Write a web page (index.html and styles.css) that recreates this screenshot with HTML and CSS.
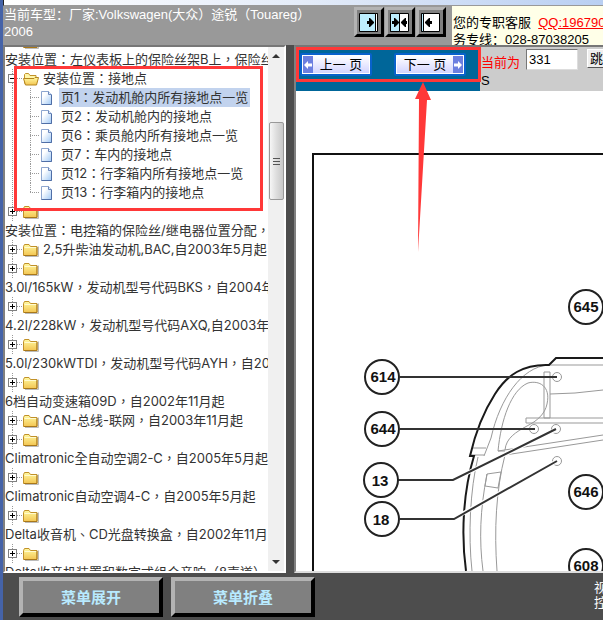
FILE: index.html
```
<!DOCTYPE html>
<html lang="zh-CN">
<head>
<meta charset="utf-8">
<meta name="viewport" content="width=device-width, initial-scale=1">
<title>当前车型</title>
<link rel="stylesheet" href="styles.css">
</head>
<body>
<svg class="defs" aria-hidden="true">
  <defs>
    <linearGradient id="gold" x1="0" y1="0" x2="0" y2="1"><stop offset="0" stop-color="#fff9a0"/><stop offset="1" stop-color="#f3c552"/></linearGradient>
    <linearGradient id="sheet" x1="0" y1="0" x2="1" y2="1"><stop offset="0.3" stop-color="#fff"/><stop offset="1" stop-color="#9fc8f5"/></linearGradient>
    <symbol id="folder" viewBox="0 0 16 16">
      <path d="M2 14.5h13.5v-10" fill="none" stroke="#bbb"/>
      <path d="M.5 4.500l1-2h4.500l1.500 2h6.500v9H.5z" fill="url(#gold)" stroke="#c19129"/>
      <path d="M1.500 5.500h12" stroke="#fffbd0"/>
      <path d="M14 5v8.500H1" fill="none" stroke="#a9781a"/>
    </symbol>
    <symbol id="folder-open" viewBox="0 0 16 16">
      <path d="M1.500 12.500v-9l1-1h3l1.500 2h6v3" fill="#fff6a8" stroke="#c19129"/>
      <path d="M.5 7.500h10.500l1-1h3.500l-2 7.500H2.500z" fill="url(#gold)" stroke="#b4851f"/>
    </symbol>
    <symbol id="page" viewBox="0 0 16 16">
      <path d="M2.500 1.500h7l3 3v10h-10z" fill="url(#sheet)" stroke="#8ea6cf"/>
      <path d="M9.500 1.500v3h3" fill="#dcebff" stroke="#6d88ba"/>
      <path d="M12.500 5v9.500H2.500" fill="none" stroke="#4f6ea6"/>
    </symbol>
  </defs>
</svg>
<div class="window">
  <div class="titlebar"></div>
  <header class="header">
    <h1 class="model">当前车型：厂家:Volkswagen(大众）途锐（Touareg） 2006</h1>
    <div class="views">
      <button class="view" aria-label="展开左栏"><svg viewBox="0 0 19 19"><path fill="#bdeeff" stroke="#000" d="M.5.5h18v18H.5z"/><path fill="#fff" stroke="#000" d="M16.500.5h2v18h-2z"/><path d="M8 8h2V5h1l4 4v1l-4 4h-1v-3H8z"/></svg></button>
      <button class="view" aria-label="平分"><svg viewBox="0 0 19 19"><path fill="#fff" stroke="#000" d="M.5.5h18v18H.5z"/><path fill="#bdeeff" stroke="#000" d="M.5.5h9v18h-9z"/><path d="M2 8h2V5h1l4 4v1l-4 4H4v-3H2zM17 8h-1V5h-1l-4 4v1l4 4h1v-3h1z"/></svg></button>
      <button class="view" aria-label="收起左栏"><svg viewBox="0 0 19 19"><path fill="#fff" stroke="#000" d="M.5.5h18v18H.5z"/><path fill="#bdeeff" stroke="#000" d="M.5.5h2v18h-2z"/><path d="M11 8H9V5H8L4 9v1l4 4h1v-3h2z"/></svg></button>
    </div>
    <p class="service">您的专职客服&nbsp; <a href="#qq">QQ:196790</a><br>务专线：028-87038205</p>
  </header>

  <main class="frames">
    <nav class="sidebar">
      <ul class="tree">
        <li class="row row--cut"><svg class="icon"><use href="#folder"/></svg></li>
        <li class="row row--text">安装位置：左仪表板上的保险丝架B上，保险丝</li>
        <li>
          <div class="row row--node"><button class="toggle toggle--open" aria-label="折叠"></button><svg class="icon"><use href="#folder-open"/></svg>安装位置：接地点</div>
          <ul class="pages">
            <li class="row row--page"><svg class="icon"><use href="#page"/></svg><a class="page page--current" href="#p1">页1：发动机舱内所有接地点一览</a></li>
            <li class="row row--page"><svg class="icon"><use href="#page"/></svg><a class="page" href="#p2">页2：发动机舱内的接地点</a></li>
            <li class="row row--page"><svg class="icon"><use href="#page"/></svg><a class="page" href="#p6">页6：乘员舱内所有接地点一览</a></li>
            <li class="row row--page"><svg class="icon"><use href="#page"/></svg><a class="page" href="#p7">页7：车内的接地点</a></li>
            <li class="row row--page"><svg class="icon"><use href="#page"/></svg><a class="page" href="#p12">页12：行李箱内所有接地点一览</a></li>
            <li class="row row--page"><svg class="icon"><use href="#page"/></svg><a class="page" href="#p13">页13：行李箱内的接地点</a></li>
          </ul>
        </li>
        <li class="row row--node"><button class="toggle" aria-label="展开"></button><svg class="icon"><use href="#folder"/></svg></li>
        <li class="row row--text">安装位置：电控箱的保险丝/继电器位置分配，</li>
        <li class="row row--node"><button class="toggle" aria-label="展开"></button><svg class="icon"><use href="#folder"/></svg>2,5升柴油发动机,BAC,自2003年5月起</li>
        <li class="row row--node"><button class="toggle" aria-label="展开"></button><svg class="icon"><use href="#folder"/></svg></li>
        <li class="row row--text">3.0l/165kW，发动机型号代码BKS，自2004年</li>
        <li class="row row--node"><button class="toggle" aria-label="展开"></button><svg class="icon"><use href="#folder"/></svg></li>
        <li class="row row--text">4.2l/228kW，发动机型号代码AXQ,自2003年</li>
        <li class="row row--node"><button class="toggle" aria-label="展开"></button><svg class="icon"><use href="#folder"/></svg></li>
        <li class="row row--text">5.0l/230kWTDI，发动机型号代码AYH，自20</li>
        <li class="row row--node"><button class="toggle" aria-label="展开"></button><svg class="icon"><use href="#folder"/></svg></li>
        <li class="row row--text">6档自动变速箱09D，自2002年11月起</li>
        <li class="row row--node"><button class="toggle" aria-label="展开"></button><svg class="icon"><use href="#folder"/></svg>CAN-总线-联网，自2003年11月起</li>
        <li class="row row--node"><button class="toggle" aria-label="展开"></button><svg class="icon"><use href="#folder"/></svg></li>
        <li class="row row--text">Climatronic全自动空调2-C，自2005年5月起</li>
        <li class="row row--node"><button class="toggle" aria-label="展开"></button><svg class="icon"><use href="#folder"/></svg></li>
        <li class="row row--text">Climatronic自动空调4-C，自2005年5月起</li>
        <li class="row row--node"><button class="toggle" aria-label="展开"></button><svg class="icon"><use href="#folder"/></svg></li>
        <li class="row row--text">Delta收音机、CD光盘转换盒，自2002年11月</li>
        <li class="row row--node"><button class="toggle" aria-label="展开"></button><svg class="icon"><use href="#folder"/></svg></li>
        <li class="row row--text">Delta收音机装置和数字式组合音响（8声道）</li>
      </ul>
      <div class="scroll">
        <svg class="scroll-arrow" viewBox="0 0 8 4"><path d="M0 4L4 0l4 4z"/></svg>
        <div class="thumb"><i></i><i></i><i></i></div>
        <svg class="scroll-arrow" viewBox="0 0 8 4"><path d="M0 0l4 4 4-4z"/></svg>
      </div>
      <div class="mark mark--tree"></div>
    </nav>

    <section class="content">
      <div class="toolbar">
        <div class="pager">
          <button class="turn"><span class="turn-arrow"><svg viewBox="0 0 8 8"><path d="M0 4l4-4v2.500h4v3H4V8z"/></svg></span><span class="turn-text">上一 页</span></button>
          <button class="turn"><span class="turn-text">下一 页</span><span class="turn-arrow"><svg viewBox="0 0 8 8"><path d="M8 4L4 0v2.500H0v3h4V8z"/></svg></span></button>
        </div>
        <form class="jump">
          <div class="jump-line"><label for="pageno">当前为</label><input id="pageno" type="text" value="331"><button class="go" type="button">跳</button></div>
          <div class="suffix">S</div>
        </form>
      </div>
      <svg class="diagram" viewBox="296 91 307 480" preserveAspectRatio="xMinYMin slice">
        <path d="M603 154H313v418" fill="none" stroke="#111" stroke-width="2"/>
        <g fill="none" stroke="#999">
          <path d="M548 365h55M548 365C522 367 500 398 491 438L484 456M498 451C501 420 511 390 528 383C539 380 551 386 547 404C545 414 537 421 527 426C516 432 506 438 505 450"/>
          <path d="M544 372h6v46h-6zM550 394l25-1 28-3"/>
          <path d="M603 418h-77v5h77M498 451l105-16M505 455l98-15M498 451h7"/>
          <path d="M472 448h14M470 455h14M478 457C470 490 468 535 472 571M487 474l14-2-3 16-13-2zM487 474C480 510 479 540 483 571M505 455C496 490 494 530 497 571"/>
          <circle cx="557" cy="377" r="4.500"/><circle cx="534" cy="429" r="4.500"/><circle cx="556" cy="429" r="4.500"/><circle cx="557" cy="461" r="4.500"/>
        </g>
        <path d="M603 358h-47l-7 7C523 364 507 375 495 394C484 411 476 430 470 456h4C463 492 461 535 466 571" fill="none" stroke="#1a1a1a" stroke-width="2"/>
        <g fill="none" stroke="#fff" stroke-width="4"><path d="M453 480l104-51M453 519l104-58"/></g>
        <path d="M400 377h157M400 429h135M398 480h55l103-51M400 519h54l103-58" fill="none" stroke="#333" stroke-width="2"/>
        <g class="callouts">
          <circle cx="382" cy="377" r="17"/><circle cx="382" cy="429" r="17"/><circle cx="381" cy="480" r="17"/><circle cx="382" cy="519" r="17"/><circle cx="586" cy="307" r="17"/><circle cx="586" cy="492" r="17"/><circle cx="586" cy="566" r="17"/>
        </g>
        <g class="numbers">
          <text x="383" y="382">614</text><text x="383" y="434">644</text><text x="380" y="486">13</text><text x="381" y="525">18</text><text x="586" y="312">645</text><text x="586" y="497">646</text><text x="586" y="571">608</text>
        </g>
      </svg>
      <div class="mark mark--pager"></div>
      <svg class="pointer" viewBox="0 0 18 170"><path d="M9 0l8 18h-4L4 170 5 17H1z" fill="#ff3838"/></svg>
    </section>
  </main>

  <footer class="footer">
    <button class="menu">菜单展开</button>
    <button class="menu">菜单折叠</button>
    <p class="video">视<br>控</p>
  </footer>
</div>
</body>
</html>
```

FILE: styles.css
```
* { box-sizing: border-box; }
html, body { margin: 0; height: 100%; }
body {
  font: 13px/17px "Liberation Sans", "Noto Sans CJK SC", sans-serif;
  background: #4d4d4d;
  overflow: hidden;
}
button, input { font: inherit; padding: 0; margin: 0; }
ul { list-style: none; margin: 0; padding: 0; }
p, h1 { margin: 0; font: inherit; }
.defs { position: absolute; width: 0; height: 0; }

.window {
  display: flex;
  flex-direction: column;
  height: 100vh;
  border-left: 3px solid #4563a8;
}
.titlebar {
  flex: none;
  height: 6px;
  border-bottom: 1px solid #999;
  border-left: 1px solid #222;
  background: linear-gradient(90deg, #fff, #e4ecf9 50%, #b9cff2);
}

.header {
  display: flex;
  flex: none;
  height: 39px;
  background: #999;
  overflow: hidden;
}
.model { flex: 1; padding: 0 40px 0 1px; color: #fff; }
.views { display: flex; gap: 1px; padding: 1px 6px 0 0; }
.view {
  width: 30px;
  height: 30px;
  padding: 2px;
  border: 3px solid;
  border-color: #b3b3b3 #000 #000 #b3b3b3;
  background: #808080;
}
.view svg { display: block; width: 19px; height: 19px; }
.service {
  width: 151px;
  padding: 8px 0 0 1px;
  background: #ffffe8;
  color: #000;
  white-space: nowrap;
  overflow: hidden;
}
.service a { color: #f00; }

.frames { display: flex; flex: 1; min-height: 0; }
.sidebar {
  position: relative;
  display: flex;
  flex: none;
  width: 283px;
  background: #fff;
  border: 2px solid;
  border-color: #777 #fff #fff #808080;
}
.tree {
  flex: 1;
  min-width: 0;
  overflow: hidden;
  font-family: Inter, "Noto Sans CJK TC", "Noto Sans CJK SC", sans-serif;
  font-feature-settings: "locl" 0;
  color: #333;
}
.row {
  display: flex;
  align-items: center;
  height: 19px;
  white-space: nowrap;
}
.row--cut { height: 3px; padding-left: 18px; align-items: flex-end; overflow: hidden; }
.icon { flex: none; width: 16px; height: 16px; margin-right: 4px; }
.row--node, .pages {
  background: repeating-linear-gradient(#999 0 1px, transparent 1px 2px) 7px 0 / 1px 100% no-repeat;
}
.row--node {
  padding-left: 3px;
  background:
    repeating-linear-gradient(#999 0 1px, transparent 1px 2px) 7px 0 / 1px 100% no-repeat,
    repeating-linear-gradient(90deg, #999 0 1px, transparent 1px 2px) 12px 9px / 6px 1px no-repeat;
}
.toggle {
  flex: none;
  width: 9px;
  height: 9px;
  margin-right: 6px;
  border: 1px solid #808080;
  background:
    linear-gradient(#000, #000) center / 5px 1px no-repeat,
    linear-gradient(#000, #000) center / 1px 5px no-repeat,
    #fff;
}
.toggle--open { background: linear-gradient(#000, #000) center / 5px 1px no-repeat, #fff; }
.row--page {
  padding-left: 34px;
  background:
    repeating-linear-gradient(#999 0 1px, transparent 1px 2px) 25px 0 / 1px 100% no-repeat,
    repeating-linear-gradient(90deg, #999 0 1px, transparent 1px 2px) 25px 9px / 10px 1px no-repeat;
}
.row--page:last-child {
  background-size: 1px 10px, 10px 1px;
}
.page { color: inherit; text-decoration: none; line-height: 19px; padding: 0 2px; }
.page--current { background: #c2d3ee; }

.scroll {
  display: flex;
  flex: none;
  flex-direction: column;
  align-items: center;
  justify-content: space-between;
  width: 16px;
  padding: 7px 0;
  background: #f0f0f0;
}
.scroll-arrow { width: 8px; height: 4px; fill: #333; }
.thumb {
  display: flex;
  flex-direction: column;
  align-items: center;
  justify-content: center;
  gap: 2px;
  width: 15px;
  height: 78px;
  margin: 64px 0 auto;
  border: 1px solid #999;
  border-radius: 2px;
  background: linear-gradient(90deg, #f6f6f6, #ddd 50%, #c8c8c8);
}
.thumb i { width: 7px; height: 1px; background: #555; }

.mark { position: absolute; border: 3px solid #ff3838; pointer-events: none; }
.mark--tree { left: 9px; top: 19px; width: 249px; height: 145px; }
.mark--pager { left: 0; top: 0; width: 185px; height: 35px; }

.content {
  position: relative;
  display: flex;
  flex-direction: column;
  flex: 1;
  min-width: 0;
  margin-left: 8px;
  background: #fff;
  border: 2px solid;
  border-color: #777 transparent #ddd #808080;
  border-right: 0;
}
.toolbar { display: flex; flex: none; height: 44px; background: #069; }
.pager { display: flex; gap: 22px; width: 184px; padding: 6px 0 0 4px; }
.turn {
  display: flex;
  align-items: stretch;
  width: 72px;
  height: 23px;
  padding: 1px;
  border: 2px solid #0862cc;
  border-radius: 2px;
  background: #fff;
  color: #000;
}
.turn-arrow { display: flex; align-items: center; padding: 0 1px; background: #6c7fe0; }
.turn-arrow svg { width: 8px; height: 8px; fill: #fff; }
.turn-text { flex: 1; line-height: 17px; background: linear-gradient(#fff, #d3d4ff); white-space: nowrap; }
.jump { flex: 1; min-width: 0; padding: 2px 0 0 1px; background: #ccc; overflow: hidden; }
.jump-line { display: flex; align-items: flex-start; height: 24px; white-space: nowrap; }
.jump label { padding-top: 5px; color: #f00; }
.jump input { width: 52px; height: 21px; margin: 0 9px 0 6px; padding: 0 2px; border: 1px solid; border-color: #777 #ddd #ddd #777; background: #fff; }
.go { flex: 1; height: 19px; border: 1px solid; border-color: #fff #555 #555 #fff; border-right: 0; background: #eee; overflow: hidden; text-align: right; }
.suffix { line-height: 16px; }
.diagram { flex: 1; min-height: 0; width: 100%; display: block; }
.callouts { fill: #fff; stroke: #222; stroke-width: 2px; }
.numbers { font: bold 15px "Liberation Sans", sans-serif; text-anchor: middle; fill: #111; }
.pointer { position: absolute; left: 118px; top: 35px; width: 18px; height: 170px; }

.footer {
  display: flex;
  flex: none;
  gap: 8px;
  height: 47px;
  padding: 4px 0 0 16px;
  background: #4d4d4d;
  overflow: hidden;
}
.menu {
  width: 144px;
  height: 40px;
  border: 4px solid;
  border-color: #b3b3b3 #000 #000 #b3b3b3;
  background: #808080;
  color: #b8eaff;
  font-size: 15px;
  font-weight: bold;
}
.video { width: 9px; margin-left: auto; padding-top: 3px; line-height: 15px; color: #fff; overflow: hidden; white-space: nowrap; }
```
